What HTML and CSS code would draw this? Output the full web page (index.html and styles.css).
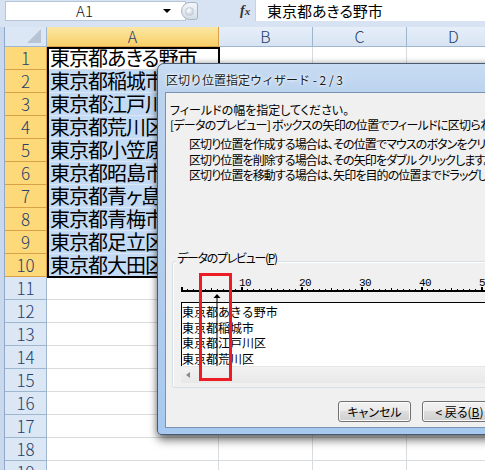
FILE: index.html
```html
<!DOCTYPE html>
<html lang="ja">
<head>
<meta charset="utf-8">
<link rel="stylesheet" href="styles.css">
</head>
<body>
<div class="formula-bar">
  <div class="name-box"><span class="name">A1</span><span class="dd"></span></div>
  <div class="grip"><span class="bead"></span></div>
  <div class="fx">f<span>x</span></div>
  <div class="formula">東京都あきる野市</div>
</div>
<div class="sheet">
  <div class="row head">
    <div class="gut"></div>
    <div class="rh corner"><svg width="15" height="15" viewBox="0 0 15 15"><polygon points="14,0 14,14 0,14" fill="#b7c4d6"/></svg></div>
    <div class="ch col-a sel">A</div>
    <div class="ch col-b">B</div>
    <div class="ch col-c">C</div>
    <div class="ch col-d">D</div>
  </div>
  <div class="row"><div class="gut"></div><div class="rh sel">1</div><div class="cell col-a active">東京都あきる野市</div><div class="cell col-b"></div><div class="cell col-c"></div><div class="cell col-d"></div></div>
  <div class="row"><div class="gut"></div><div class="rh sel">2</div><div class="cell col-a sel">東京都稲城市</div><div class="cell col-b"></div><div class="cell col-c"></div><div class="cell col-d"></div></div>
  <div class="row"><div class="gut"></div><div class="rh sel">3</div><div class="cell col-a sel">東京都江戸川区</div><div class="cell col-b"></div><div class="cell col-c"></div><div class="cell col-d"></div></div>
  <div class="row"><div class="gut"></div><div class="rh sel">4</div><div class="cell col-a sel">東京都荒川区</div><div class="cell col-b"></div><div class="cell col-c"></div><div class="cell col-d"></div></div>
  <div class="row"><div class="gut"></div><div class="rh sel">5</div><div class="cell col-a sel">東京都小笠原村</div><div class="cell col-b"></div><div class="cell col-c"></div><div class="cell col-d"></div></div>
  <div class="row"><div class="gut"></div><div class="rh sel">6</div><div class="cell col-a sel">東京都昭島市</div><div class="cell col-b"></div><div class="cell col-c"></div><div class="cell col-d"></div></div>
  <div class="row"><div class="gut"></div><div class="rh sel">7</div><div class="cell col-a sel">東京都青ヶ島村</div><div class="cell col-b"></div><div class="cell col-c"></div><div class="cell col-d"></div></div>
  <div class="row"><div class="gut"></div><div class="rh sel">8</div><div class="cell col-a sel">東京都青梅市</div><div class="cell col-b"></div><div class="cell col-c"></div><div class="cell col-d"></div></div>
  <div class="row"><div class="gut"></div><div class="rh sel">9</div><div class="cell col-a sel">東京都足立区</div><div class="cell col-b"></div><div class="cell col-c"></div><div class="cell col-d"></div></div>
  <div class="row"><div class="gut"></div><div class="rh sel">10</div><div class="cell col-a sel">東京都大田区</div><div class="cell col-b"></div><div class="cell col-c"></div><div class="cell col-d"></div></div>
  <div class="row"><div class="gut"></div><div class="rh">11</div><div class="cell col-a"></div><div class="cell col-b"></div><div class="cell col-c"></div><div class="cell col-d"></div></div>
  <div class="row"><div class="gut"></div><div class="rh">12</div><div class="cell col-a"></div><div class="cell col-b"></div><div class="cell col-c"></div><div class="cell col-d"></div></div>
  <div class="row"><div class="gut"></div><div class="rh">13</div><div class="cell col-a"></div><div class="cell col-b"></div><div class="cell col-c"></div><div class="cell col-d"></div></div>
  <div class="row"><div class="gut"></div><div class="rh">14</div><div class="cell col-a"></div><div class="cell col-b"></div><div class="cell col-c"></div><div class="cell col-d"></div></div>
  <div class="row"><div class="gut"></div><div class="rh">15</div><div class="cell col-a"></div><div class="cell col-b"></div><div class="cell col-c"></div><div class="cell col-d"></div></div>
  <div class="row"><div class="gut"></div><div class="rh">16</div><div class="cell col-a"></div><div class="cell col-b"></div><div class="cell col-c"></div><div class="cell col-d"></div></div>
  <div class="row"><div class="gut"></div><div class="rh">17</div><div class="cell col-a"></div><div class="cell col-b"></div><div class="cell col-c"></div><div class="cell col-d"></div></div>
  <div class="row"><div class="gut"></div><div class="rh">18</div><div class="cell col-a"></div><div class="cell col-b"></div><div class="cell col-c"></div><div class="cell col-d"></div></div>
  <div class="row"><div class="gut"></div><div class="rh">19</div><div class="cell col-a"></div><div class="cell col-b"></div><div class="cell col-c"></div><div class="cell col-d"></div></div>
</div>
<div class="selection"></div>

<div class="dialog">
  <div class="titlebar">区切り位置指定ウィザード - 2 / 3</div>
  <div class="client">
    <p class="line">フィールドの幅を指定してください。</p>
    <p class="line tight">[データのプレビュー] ボックスの矢印の位置でフィールドに区切られます。</p>
    <ul class="tips">
      <li>区切り位置を作成する場合は、その位置でマウスのボタンをクリックします。</li>
      <li>区切り位置を削除する場合は、その矢印をダブル クリックします。</li>
      <li>区切り位置を移動する場合は、矢印を目的の位置までドラッグします。</li>
    </ul>
    <div class="group">
      <div class="legend">データのプレビュー(<u>P</u>)</div>
      <svg class="ruler" width="310" height="17" viewBox="0 0 310 17">
        <rect x="0" y="14" width="310" height="2" fill="#000"/>
        <g fill="#000">
          <rect x="0" y="11" width="2" height="3"/>
          <rect x="6" y="13" width="1" height="1"/><rect x="12" y="13" width="1" height="1"/><rect x="18" y="13" width="1" height="1"/><rect x="24" y="13" width="1" height="1"/>
          <rect x="30" y="12" width="1" height="2"/>
          <rect x="36" y="13" width="1" height="1"/><rect x="42" y="13" width="1" height="1"/><rect x="48" y="13" width="1" height="1"/><rect x="54" y="13" width="1" height="1"/>
          <rect x="60" y="11" width="2" height="3"/>
          <rect x="66" y="13" width="1" height="1"/><rect x="72" y="13" width="1" height="1"/><rect x="78" y="13" width="1" height="1"/><rect x="84" y="13" width="1" height="1"/>
          <rect x="90" y="12" width="1" height="2"/>
          <rect x="96" y="13" width="1" height="1"/><rect x="102" y="13" width="1" height="1"/><rect x="108" y="13" width="1" height="1"/><rect x="114" y="13" width="1" height="1"/>
          <rect x="120" y="11" width="2" height="3"/>
          <rect x="126" y="13" width="1" height="1"/><rect x="132" y="13" width="1" height="1"/><rect x="138" y="13" width="1" height="1"/><rect x="144" y="13" width="1" height="1"/>
          <rect x="150" y="12" width="1" height="2"/>
          <rect x="156" y="13" width="1" height="1"/><rect x="162" y="13" width="1" height="1"/><rect x="168" y="13" width="1" height="1"/><rect x="174" y="13" width="1" height="1"/>
          <rect x="180" y="11" width="2" height="3"/>
          <rect x="186" y="13" width="1" height="1"/><rect x="192" y="13" width="1" height="1"/><rect x="198" y="13" width="1" height="1"/><rect x="204" y="13" width="1" height="1"/>
          <rect x="210" y="12" width="1" height="2"/>
          <rect x="216" y="13" width="1" height="1"/><rect x="222" y="13" width="1" height="1"/><rect x="228" y="13" width="1" height="1"/><rect x="234" y="13" width="1" height="1"/>
          <rect x="240" y="11" width="2" height="3"/>
          <rect x="246" y="13" width="1" height="1"/><rect x="252" y="13" width="1" height="1"/><rect x="258" y="13" width="1" height="1"/><rect x="264" y="13" width="1" height="1"/>
          <rect x="270" y="12" width="1" height="2"/>
          <rect x="276" y="13" width="1" height="1"/><rect x="282" y="13" width="1" height="1"/><rect x="288" y="13" width="1" height="1"/><rect x="294" y="13" width="1" height="1"/>
          <rect x="300" y="11" width="2" height="3"/>
          <rect x="306" y="13" width="1" height="1"/>
        </g>
        <g class="ruler-num">
          <text x="58" y="10">10</text>
          <text x="118" y="10">20</text>
          <text x="178" y="10">30</text>
          <text x="238" y="10">40</text>
          <text x="298" y="10">50</text>
        </g>
      </svg>
      <div class="preview">
        <div class="pv-text">
          <div>東京都あきる野市</div>
          <div>東京都稲城市</div>
          <div>東京都江戸川区</div>
          <div>東京都荒川区</div>
        </div>
        <div class="hscroll"><span class="sb-left"></span></div>
      </div>
      <svg class="break" width="8" height="72" viewBox="0 0 8 72">
        <polygon points="4,0 0.5,4 7.5,4" fill="#000"/>
        <rect x="3.5" y="3" width="1" height="69" fill="#000"/>
      </svg>
    </div>
    <div class="buttons">
      <div class="btn cancel">キャンセル</div>
      <div class="btn back">&lt; 戻る(<u>B</u>)</div>
    </div>
  </div>
</div>
<div class="highlight"></div>
</body>
</html>
```

FILE: styles.css
```css
* { box-sizing: border-box; }
html, body { margin: 0; padding: 0; }
body {
  width: 485px;
  height: 470px;
  overflow: hidden;
  position: relative;
  background: #fff;
  font-family: "Noto Sans CJK JP", "Noto Sans", sans-serif;
  color: #000;
}

/* formula bar */
.formula-bar {
  height: 27px;
  background: #d7e3f2;
  display: flex;
  align-items: flex-start;
}
.name-box {
  margin: 1px 0 0 5px;
  width: 181px;
  height: 20px;
  background: #fff;
  border: 1px solid #b6c6da;
  display: flex;
  align-items: center;
  padding-right: 14px;
}
.name {
  flex: 1;
  text-align: center;
  font: 300 15px/18px "Noto Sans CJK JP", sans-serif;
  color: #111;
}
.dd {
  width: 0; height: 0;
  border-left: 4px solid transparent;
  border-right: 4px solid transparent;
  border-top: 4px solid #000;
}
.grip {
  margin: 2px 0 0 -5px;
  width: 17px;
  height: 18px;
  border-radius: 9px 3px 3px 9px;
  border: 1px solid #a8b5c6;
  background: linear-gradient(#f4f6f9, #d5dde8);
  display: flex;
  align-items: center;
  padding-left: 3px;
}
.bead {
  width: 9px; height: 9px;
  border-radius: 50%;
  background: radial-gradient(circle at 40% 35%, #ffffff, #b9c4d2);
  border: 1px solid #c2ccd8;
}
.fx {
  margin: 3px 0 0 42px;
  width: 15px;
  font: italic bold 14px/16px "Liberation Serif", serif;
  color: #333;
}
.fx span { font-size: 11px; }
.formula {
  flex: 1;
  height: 21px;
  background: #fff;
  border-left: 1px solid #c5d2e2;
  padding-left: 11px;
  font: 15px/21px "Noto Sans CJK JP", sans-serif;
  font-feature-settings: "palt";
  white-space: nowrap;
}

/* sheet */
.sheet { display: flex; flex-direction: column; }
.row { display: flex; height: 23px; }
.row.head { height: 20px; }
.gut {
  flex: none;
  width: 5px;
  background: #c9d8ec;
  border-right: 1px solid #8fa8c9;
}
.rh {
  flex: none;
  width: 42px;
  background: #dce7f5;
  border-right: 1px solid #9eb6ce;
  border-bottom: 1px solid #9eb6ce;
  text-align: center;
  color: #25406b;
  font: 300 17px/22px "Noto Sans CJK JP", sans-serif;
}
.rh.sel {
  background: #fdd97a;
  border-color: #d6a147;
}
.rh.corner {
  display: flex;
  align-items: flex-end;
  justify-content: flex-end;
  padding: 0 4px 2px 0;
}
.ch {
  flex: none;
  background: linear-gradient(#e6eef9, #d8e4f3);
  border-right: 1px solid #9eb6ce;
  border-bottom: 1px solid #9eb6ce;
  text-align: center;
  color: #25406b;
  font: 300 16px/19px "Noto Sans CJK JP", sans-serif;
}
.ch.sel {
  background: linear-gradient(#fce7a4, #f8cf68);
  border-color: #d9a24a;
}
.col-a { width: 172px; }
.col-b, .col-c, .col-d { width: 94px; }
.cell {
  flex: none;
  border-right: 1px solid #d9dcdf;
  border-bottom: 1px solid #d9dcdf;
  padding-left: 3px;
  font: 20px/22px "Noto Sans CJK JP", sans-serif;
  font-feature-settings: "palt";
  letter-spacing: -1px;
  white-space: nowrap;
  overflow: hidden;
}
.cell.sel {
  background: #c4dbf6;
  border-bottom-color: #dbe7f6;
}
.selection {
  position: absolute;
  left: 47px;
  top: 47px;
  width: 173px;
  height: 231px;
  border: 2px solid #000;
}

/* dialog */
.dialog {
  position: absolute;
  left: 157px;
  top: 63px;
  width: 360px;
  height: 372px;
  border: 1px solid #4a5a70;
  border-radius: 7px 7px 4px 4px;
  background: linear-gradient(180deg, #c9ddf3 0, #bcd3ee 28px, #a8c9ef 100%);
  box-shadow: 1px 5px 10px rgba(0, 0, 0, 0.55), 0 0 6px rgba(0, 0, 0, 0.25);
  padding: 0 7px 6px 7px;
  display: flex;
  flex-direction: column;
}
.titlebar {
  flex: none;
  height: 28px;
  margin: 0 -7px;
  padding: 7px 0 0 8px;
  font: 12px/18px "Noto Sans CJK JP", sans-serif;
  color: #1a1a1a;
  text-shadow: 0 0 4px #fff, 0 0 2px #fff;
  white-space: nowrap;
}
.client {
  flex: none;
  height: 336px;
  border: 1px solid #7b93b1;
  background: #f0f0f0;
  padding-top: 9px;
  overflow: hidden;
  font: 12px "Noto Sans CJK JP", sans-serif;
  font-feature-settings: "palt";
  white-space: nowrap;
}
.line {
  margin: 0;
  padding-left: 4px;
  line-height: 15px;
}
.line.tight { letter-spacing: -0.7px; }
.tips {
  margin: 4px 0 0;
  padding-left: 23px;
  list-style: none;
  line-height: 15.5px;
  letter-spacing: -0.9px;
}
.group {
  position: relative;
  margin: 78.5px 0 0 6px;
  border: 1px solid #d5dfe5;
  border-radius: 3px;
  box-shadow: inset 1px 1px 0 #fff;
  padding-bottom: 4px;
}
.legend {
  width: max-content;
  margin: -12px 0 0 3px;
  padding: 0 1px;
  background: #f0f0f0;
  line-height: 15px;
  letter-spacing: -1.3px;
}
.ruler { display: block; margin: 11px 0 0 8px; }
.ruler-num text {
  font: 11px "Liberation Mono", monospace;
  letter-spacing: -0.6px;
  fill: #000;
}
.preview {
  margin: 9px 0 0 8px;
  border-top: 1px solid #000;
}
.pv-text {
  background: #fff;
  border-left: 1px solid #000;
  padding-top: 1px;
  line-height: 15.5px;
  font-feature-settings: normal;
}
.hscroll {
  height: 17px;
  background: linear-gradient(#f2f2f2, #e8e8e8);
  border-top: 1px solid #e6e6e6;
  display: flex;
  align-items: center;
  padding-left: 5px;
}
.sb-left {
  width: 0; height: 0;
  border-top: 3px solid transparent;
  border-bottom: 3px solid transparent;
  border-right: 4px solid #8a8a8a;
}
.break {
  position: absolute;
  left: 40px;
  top: 32px;
}
.buttons {
  display: flex;
  gap: 11px;
  margin: 13px 0 0 172px;
}
.btn {
  flex: none;
  height: 21px;
  border: 1px solid #707070;
  border-radius: 3px;
  background: linear-gradient(#f2f2f2 0, #ebebeb 45%, #dddddd 50%, #cfcfcf 100%);
  box-shadow: inset 0 0 0 1px #fbfbfb;
  text-align: center;
  font-size: 12px;
  line-height: 19px;
}
.btn.cancel { width: 73px; }
.btn.back { width: 75px; }

.highlight {
  position: absolute;
  left: 199px;
  top: 273px;
  width: 33px;
  height: 108px;
  border: 3px solid #ed1c24;
}
```
